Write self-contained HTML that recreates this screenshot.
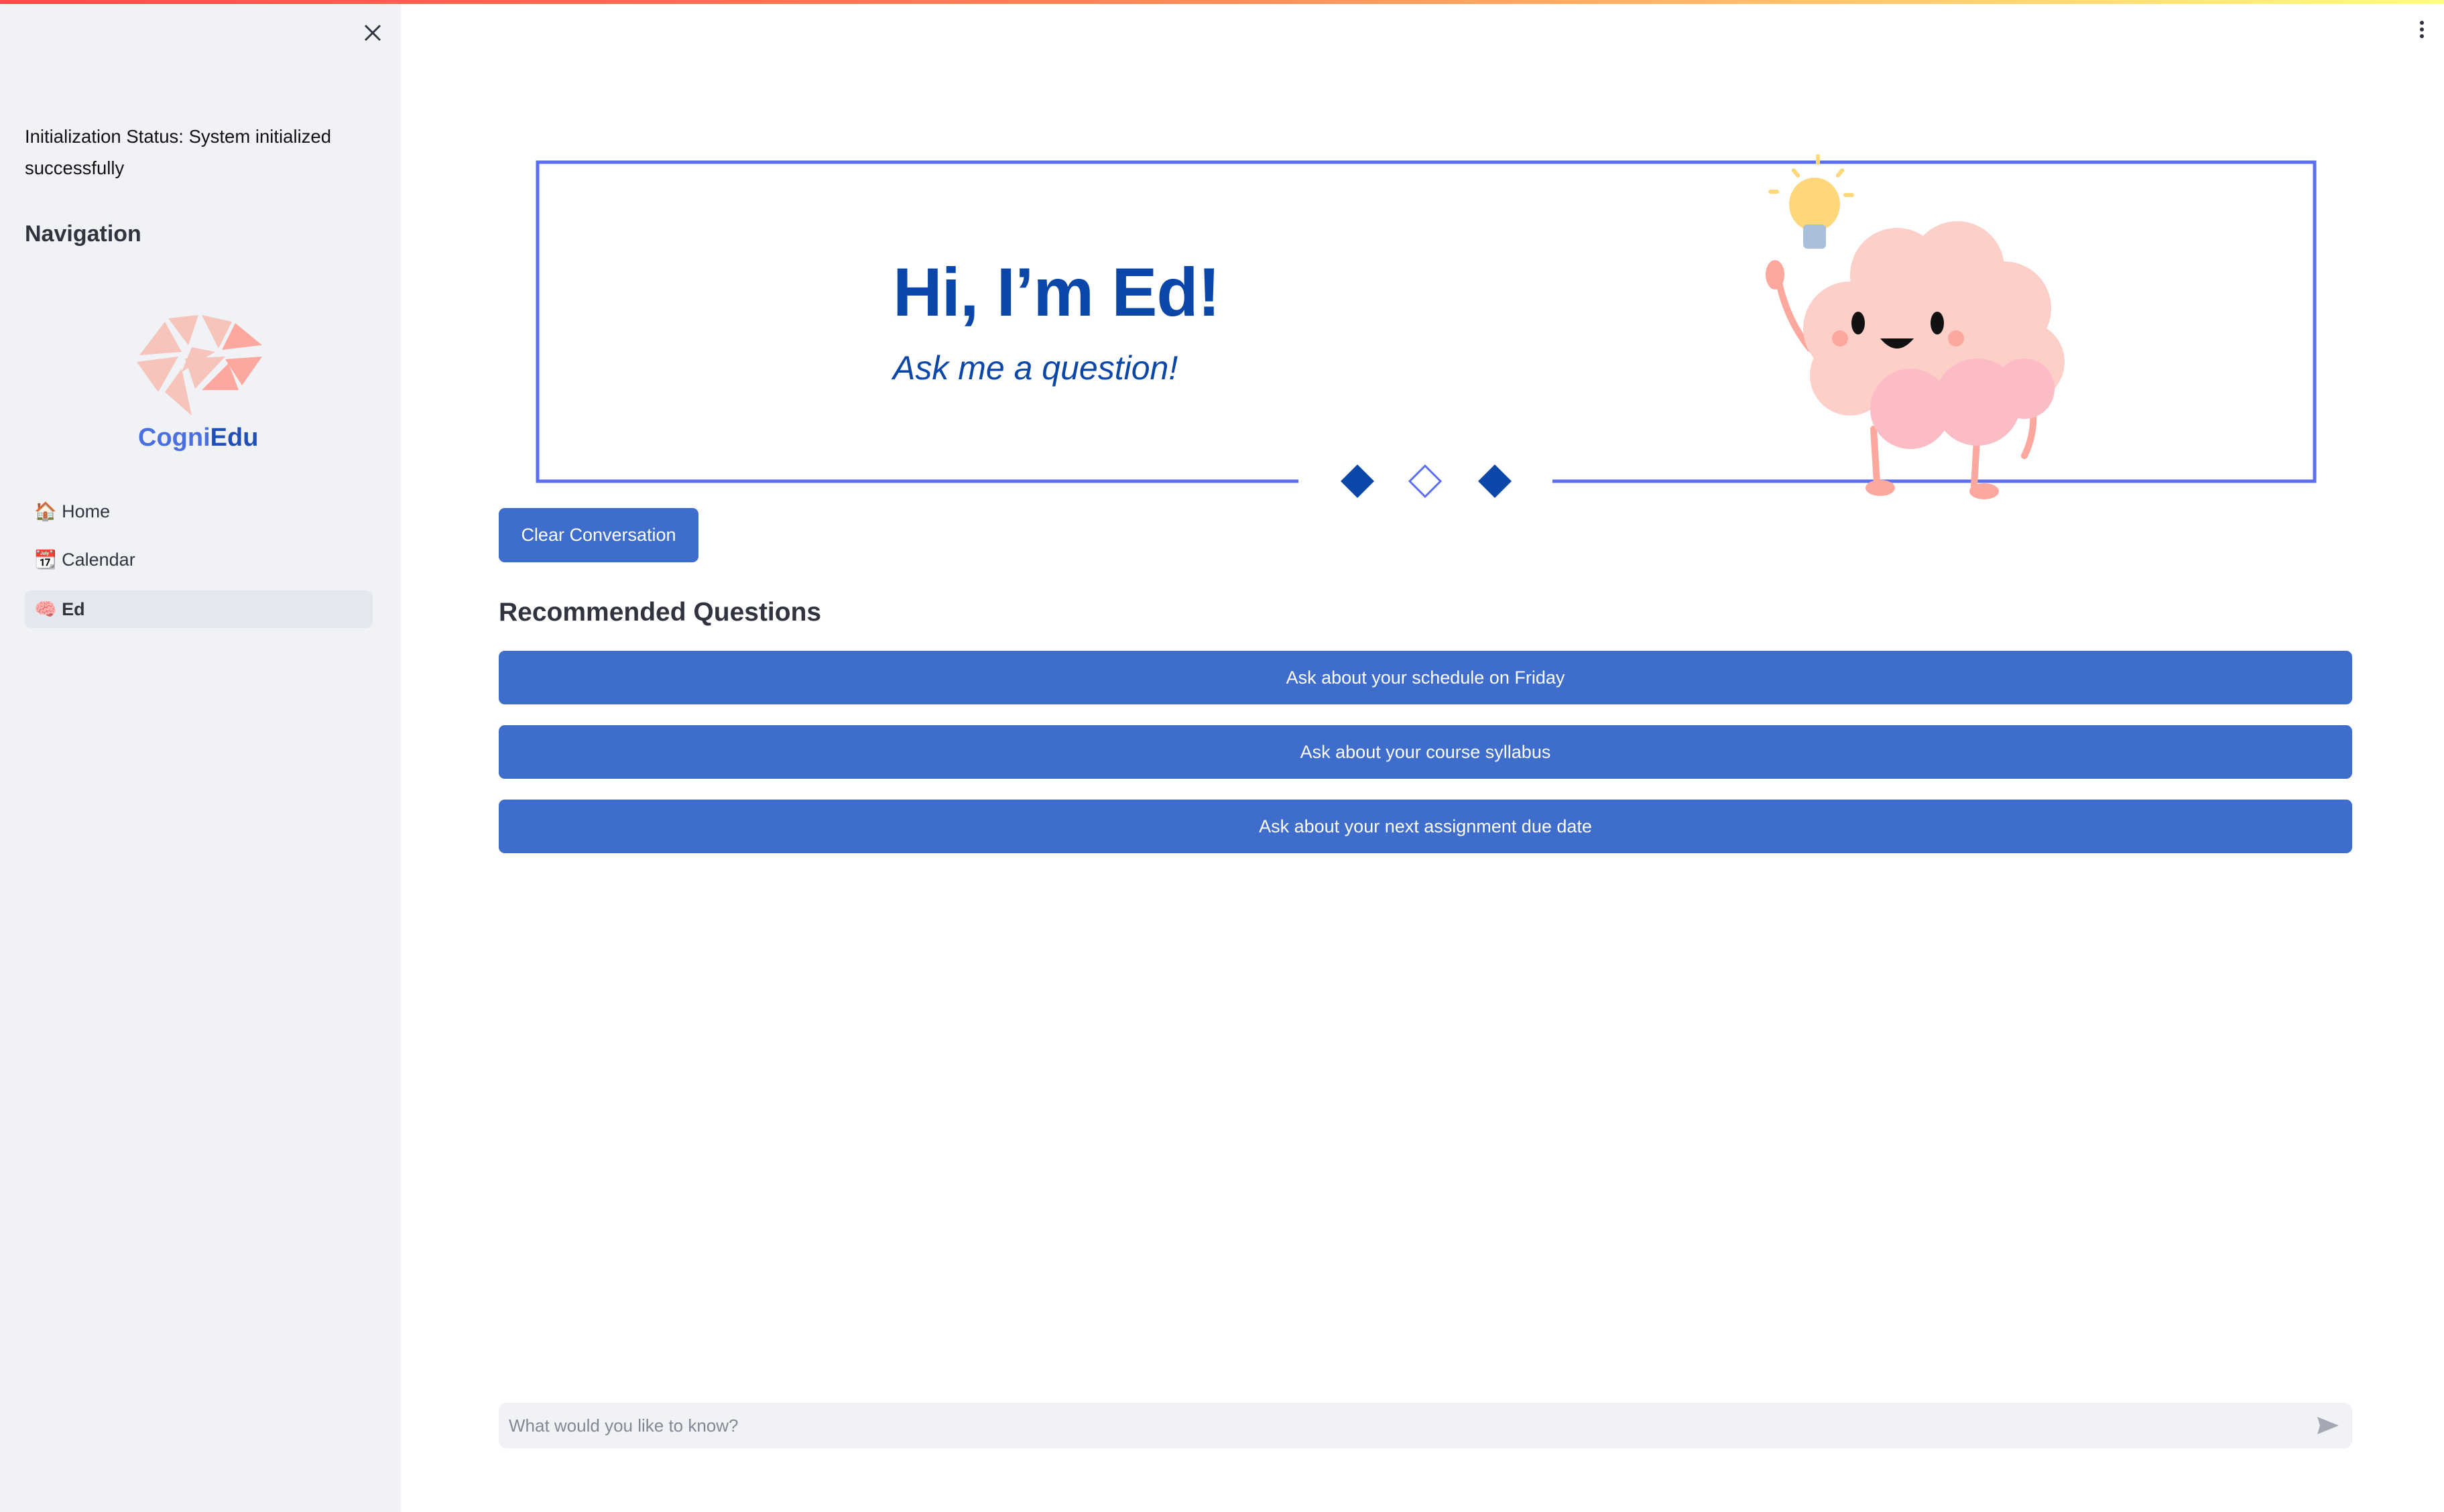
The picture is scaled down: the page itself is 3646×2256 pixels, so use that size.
<!DOCTYPE html>
<html><head><meta charset="utf-8">
<style>
*{margin:0;padding:0;box-sizing:border-box}
html,body{width:3646px;height:2256px;overflow:hidden;background:#fff;font-family:"Liberation Sans","DejaVu Sans",sans-serif;color:#31333f}
.topbar{position:absolute;left:0;top:0;width:3646px;height:6px;background:linear-gradient(90deg,#ff4b4b,#ff8c5a 50%,#fffd80);z-index:5}
.side{position:absolute;left:0;top:0;width:598px;height:2256px;background:#f0f2f6}
.abs{position:absolute}
.nav{position:absolute;left:37px;width:519px;height:56px;border-radius:10px;font-size:27px;line-height:56px;padding-left:14px;color:#31333f}
.btn{position:absolute;left:744px;width:2765px;height:80px;background:#3f6dcc;border-radius:9px;color:#fff;font-size:27px;text-align:center;line-height:80px}
</style></head><body>
<div class="topbar"></div>
<div class="side">
  <svg class="abs" style="left:541px;top:34px" width="30" height="30" viewBox="0 0 30 30"><path d="M4 4L26 26M26 4L4 26" stroke="#31333f" stroke-width="3"/></svg>
  <div class="abs" style="left:37px;top:180px;width:520px;font-size:27.5px;line-height:47px;color:#111">Initialization Status: System initialized successfully</div>
  <div class="abs" style="left:37px;top:330px;font-size:34px;font-weight:bold">Navigation</div>
  <svg class="abs" style="left:196px;top:470px" width="200" height="160" viewBox="0 0 200 160">
    <polygon points="12,60 50,10 75,55" fill="#f6c4bb"/>
    <polygon points="55,5 100,0 85,45" fill="#f6c4bb"/>
    <polygon points="105,0 150,10 130,50" fill="#f6c4bb"/>
    <polygon points="155,12 195,45 135,52" fill="#fca89e"/>
    <polygon points="90,48 125,55 75,85" fill="#f6c4bb"/>
    <polygon points="8,70 70,62 40,115" fill="#f6c4bb"/>
    <polygon points="80,65 140,62 95,110" fill="#f6c4bb"/>
    <polygon points="140,66 195,62 165,105" fill="#fca89e"/>
    <polygon points="105,112 145,72 160,112" fill="#fca89e"/>
    <polygon points="75,80 90,150 50,115" fill="#f6c4bb"/>
  </svg>
  <div class="abs" style="left:206px;top:632px;font-size:38px;font-weight:bold;color:#4a6fe0">Cogni<span style="color:#1f4fb8">Edu</span></div>
  <div class="nav" style="top:735px">🏠 Home</div>
  <div class="nav" style="top:807px">📆 Calendar</div>
  <div class="nav" style="top:881px;background:#e4e7ee;font-weight:bold">🧠 Ed</div>
</div>
<svg class="abs" style="left:3605px;top:30px" width="16" height="30" viewBox="0 0 16 30"><circle cx="8" cy="4" r="3" fill="#31333f"/><circle cx="8" cy="14" r="3" fill="#31333f"/><circle cx="8" cy="24" r="3" fill="#31333f"/></svg>

<svg class="abs" style="left:790px;top:225px" width="2690" height="530" viewBox="790 225 2690 530">
  <path d="M1937 718H802V242H3453V718H2316" fill="none" stroke="#5b6ef0" stroke-width="5"/>
  <polygon points="2025,693 2050,718 2025,743 2000,718" fill="#0b47a8"/>
  <polygon points="2126,695 2149,718 2126,741 2103,718" fill="#fff" stroke="#5b6ef0" stroke-width="3"/>
  <polygon points="2230,693 2255,718 2230,743 2205,718" fill="#0b47a8"/>
  <g fill="#fdd77a"><rect x="2709" y="230" width="6" height="16" rx="3"/><rect x="2676" y="250" width="6" height="16" rx="3" transform="rotate(-40 2679 258)"/><rect x="2742" y="250" width="6" height="16" rx="3" transform="rotate(40 2745 258)"/><rect x="2638" y="283" width="16" height="6" rx="3"/><rect x="2750" y="288" width="16" height="6" rx="3"/></g>
  <ellipse cx="2707" cy="305" rx="38" ry="40" fill="#fdd77a"/>
  <rect x="2690" y="335" width="34" height="36" rx="6" fill="#a9bfdc"/>
  <path d="M2650 400 Q2660 470 2700 520" stroke="#fca89e" stroke-width="10" fill="none" stroke-linecap="round"/>
  <ellipse cx="2648" cy="410" rx="14" ry="22" fill="#fca89e"/>
  <path d="M2795 640 L2800 720 M2950 640 L2945 725" stroke="#fca89e" stroke-width="10" stroke-linecap="round"/>
  <ellipse cx="2805" cy="728" rx="22" ry="12" fill="#fca89e"/>
  <ellipse cx="2960" cy="733" rx="22" ry="12" fill="#fca89e"/>
  <path d="M3030 590 Q3040 640 3020 680" stroke="#fca89e" stroke-width="10" fill="none" stroke-linecap="round"/>
  <g fill="#fccfc9">
    <circle cx="2830" cy="410" r="70"/><circle cx="2920" cy="400" r="70"/><circle cx="2990" cy="460" r="70"/><circle cx="2760" cy="490" r="70"/>
    <circle cx="2880" cy="510" r="100"/><circle cx="3020" cy="540" r="60"/><circle cx="2760" cy="560" r="60"/>
  </g>
  <g fill="#fbbcc5"><circle cx="2850" cy="610" r="60"/><circle cx="2950" cy="600" r="65"/><circle cx="3020" cy="580" r="45"/></g>
  <ellipse cx="2772" cy="482" rx="10" ry="17" fill="#111"/>
  <ellipse cx="2890" cy="482" rx="10" ry="17" fill="#111"/>
  <path d="M2805 505 Q2830 535 2855 505 Z" fill="#111"/>
  <circle cx="2745" cy="505" r="12" fill="#fca89e"/><circle cx="2918" cy="505" r="12" fill="#fca89e"/>
</svg>
<div class="abs" style="left:1332px;top:378px;font-size:102px;font-weight:bold;color:#0b47a8;letter-spacing:-1px">Hi, I’m Ed!</div>
<div class="abs" style="left:1332px;top:520px;font-size:50px;font-style:italic;color:#0b47a8">Ask me a question!</div>

<div class="abs" style="left:744px;top:758px;width:298px;height:81px;background:#3f6dcc;border-radius:9px;color:#fff;font-size:27px;line-height:81px;text-align:center">Clear Conversation</div>
<div class="abs" style="left:744px;top:892px;font-size:39px;font-weight:bold;color:#31333f">Recommended Questions</div>
<div class="btn" style="top:971px">Ask about your schedule on Friday</div>
<div class="btn" style="top:1082px">Ask about your course syllabus</div>
<div class="btn" style="top:1193px">Ask about your next assignment due date</div>

<div class="abs" style="left:744px;top:2093px;width:2765px;height:68px;background:#f0f2f6;border-radius:12px;font-size:26px;line-height:68px;padding-left:15px;color:#858894">What would you like to know?</div>
<svg class="abs" style="left:3455px;top:2112px" width="36" height="30" viewBox="0 0 36 30"><path d="M2 2L34 15L2 28L6 15Z" fill="#a3a8b4"/></svg>
</body></html>
